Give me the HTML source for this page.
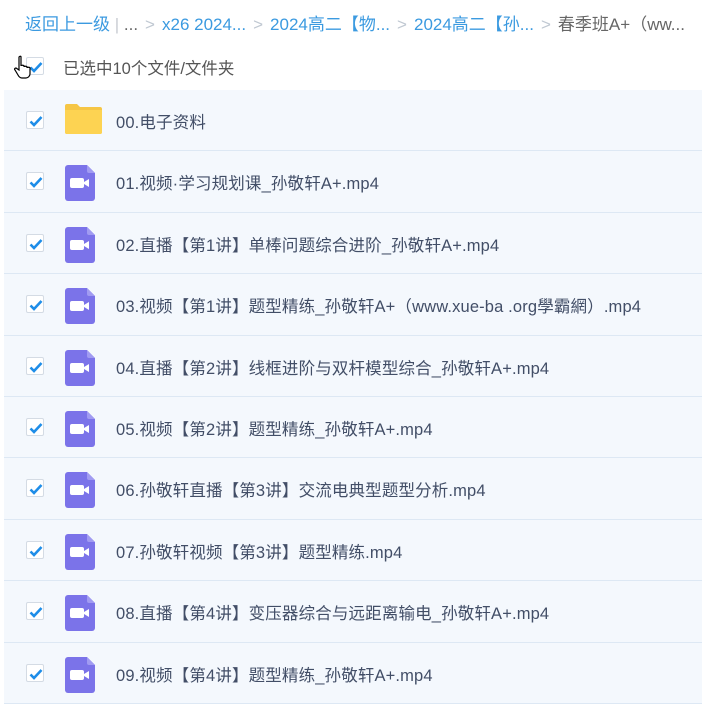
<!DOCTYPE html>
<html><head><meta charset="utf-8"><style>
*{margin:0;padding:0;box-sizing:border-box}
body{width:702px;height:714px;background:#fff;font-family:"Liberation Sans","Noto Sans CJK SC",sans-serif;position:relative;overflow:hidden}
.bc{position:absolute;top:10px;left:25px;font-size:17px;color:#3b9ae0;white-space:nowrap}
.bc .g{color:#c0c8d2;margin:0 7px}
.bc .d{color:#666}
.bc .sep{color:#c8ccd2}
.sel{position:absolute;top:55px;left:63px;font-size:16.5px;color:#555}
.cb{position:absolute;width:18px;height:18px;border:1px solid #d4dbe4;border-radius:2px;background:#fff}
.cb svg{position:absolute;left:1px;top:1px}
.row{position:absolute;left:4px;right:0;height:61.4px;background:#f4f8fd;border-bottom:1px solid #dde8f4}
.row .cb{left:22px;top:21px}
.row .t{position:absolute;left:112px;top:19px;font-size:16.5px;letter-spacing:0.15px;color:#424e67;white-space:nowrap}
.row .ic{position:absolute;left:61px;top:13px}
</style></head><body>
<div class="bc">返回上一级<span class="sep"> | </span><span class="d">...</span><span class="g">&gt;</span>x26 2024...<span class="g">&gt;</span>2024高二【物...<span class="g">&gt;</span>2024高二【孙...<span class="g">&gt;</span><span class="d">春季班A+（ww...</span></div>
<div class="cb" style="left:26px;top:57px"><svg width="16" height="16" viewBox="0 0 16 16"><path d="M2.5 8.5l3.5 3.5 7.5-8" fill="none" stroke="#1e8de8" stroke-width="2.6"/></svg></div>
<svg style="position:absolute;left:14px;top:55px" width="18" height="26" viewBox="0 0 18 26"><path d="M5 2c1-1 2-1 2 0v9c0-1 3-1 3 0v1c0-1 3-1 3 0v1c0-1 3-1 3 0v6c0 2-2 4-4 4H8c-2 0-3-1-4-3l-3-5c-1-1 0-2 1-2l3 2z" fill="#fff" stroke="#000" stroke-width="1.2"/></svg>
<div class="sel">已选中10个文件/文件夹</div>
<div id="rows"></div>
<script>
var names=["00.电子资料","01.视频·学习规划课_孙敬轩A+.mp4","02.直播【第1讲】单棒问题综合进阶_孙敬轩A+.mp4","03.视频【第1讲】题型精练_孙敬轩A+（www.xue-ba .org學霸網）.mp4","04.直播【第2讲】线框进阶与双杆模型综合_孙敬轩A+.mp4","05.视频【第2讲】题型精练_孙敬轩A+.mp4","06.孙敬轩直播【第3讲】交流电典型题型分析.mp4","07.孙敬轩视频【第3讲】题型精练.mp4","08.直播【第4讲】变压器综合与远距离输电_孙敬轩A+.mp4","09.视频【第4讲】题型精练_孙敬轩A+.mp4"];
var h="";
var chk='<div class="cb"><svg width="16" height="16" viewBox="0 0 16 16"><path d="M2.5 8.5l3.5 3.5 7.5-8" fill="none" stroke="#1e8de8" stroke-width="2.6"/></svg></div>';
var folder='<svg class="ic" width="38" height="32" viewBox="0 0 38 32"><path d="M0 3a2 2 0 0 1 2-2h10l3 3h20a2 2 0 0 1 2 2v23a2 2 0 0 1-2 2H2a2 2 0 0 1-2-2z" fill="#f6c645"/><path d="M0 7h37v22a2 2 0 0 1-2 2H2a2 2 0 0 1-2-2z" fill="#fdd352"/></svg>';
var vid='<svg class="ic" style="left:61px;top:14px" width="30" height="36" viewBox="0 0 30 36"><path d="M3 0h19l8 8v25a3 3 0 0 1-3 3H3a3 3 0 0 1-3-3V3a3 3 0 0 1 3-3z" fill="#7b73e9"/><path d="M22 0v6a2 2 0 0 0 2 2h6z" fill="#a19bf2"/><rect x="5" y="13" width="14" height="10" rx="2" fill="#fff"/><path d="M19 17l5-3v8l-5-3z" fill="#fff"/></svg>';
for(var i=0;i<10;i++){h+='<div class="row" style="top:'+(90+i*61.4)+'px">'+chk+(i==0?folder:vid)+'<div class="t">'+names[i]+'</div></div>';}
document.getElementById("rows").innerHTML=h;
</script>
</body></html>
